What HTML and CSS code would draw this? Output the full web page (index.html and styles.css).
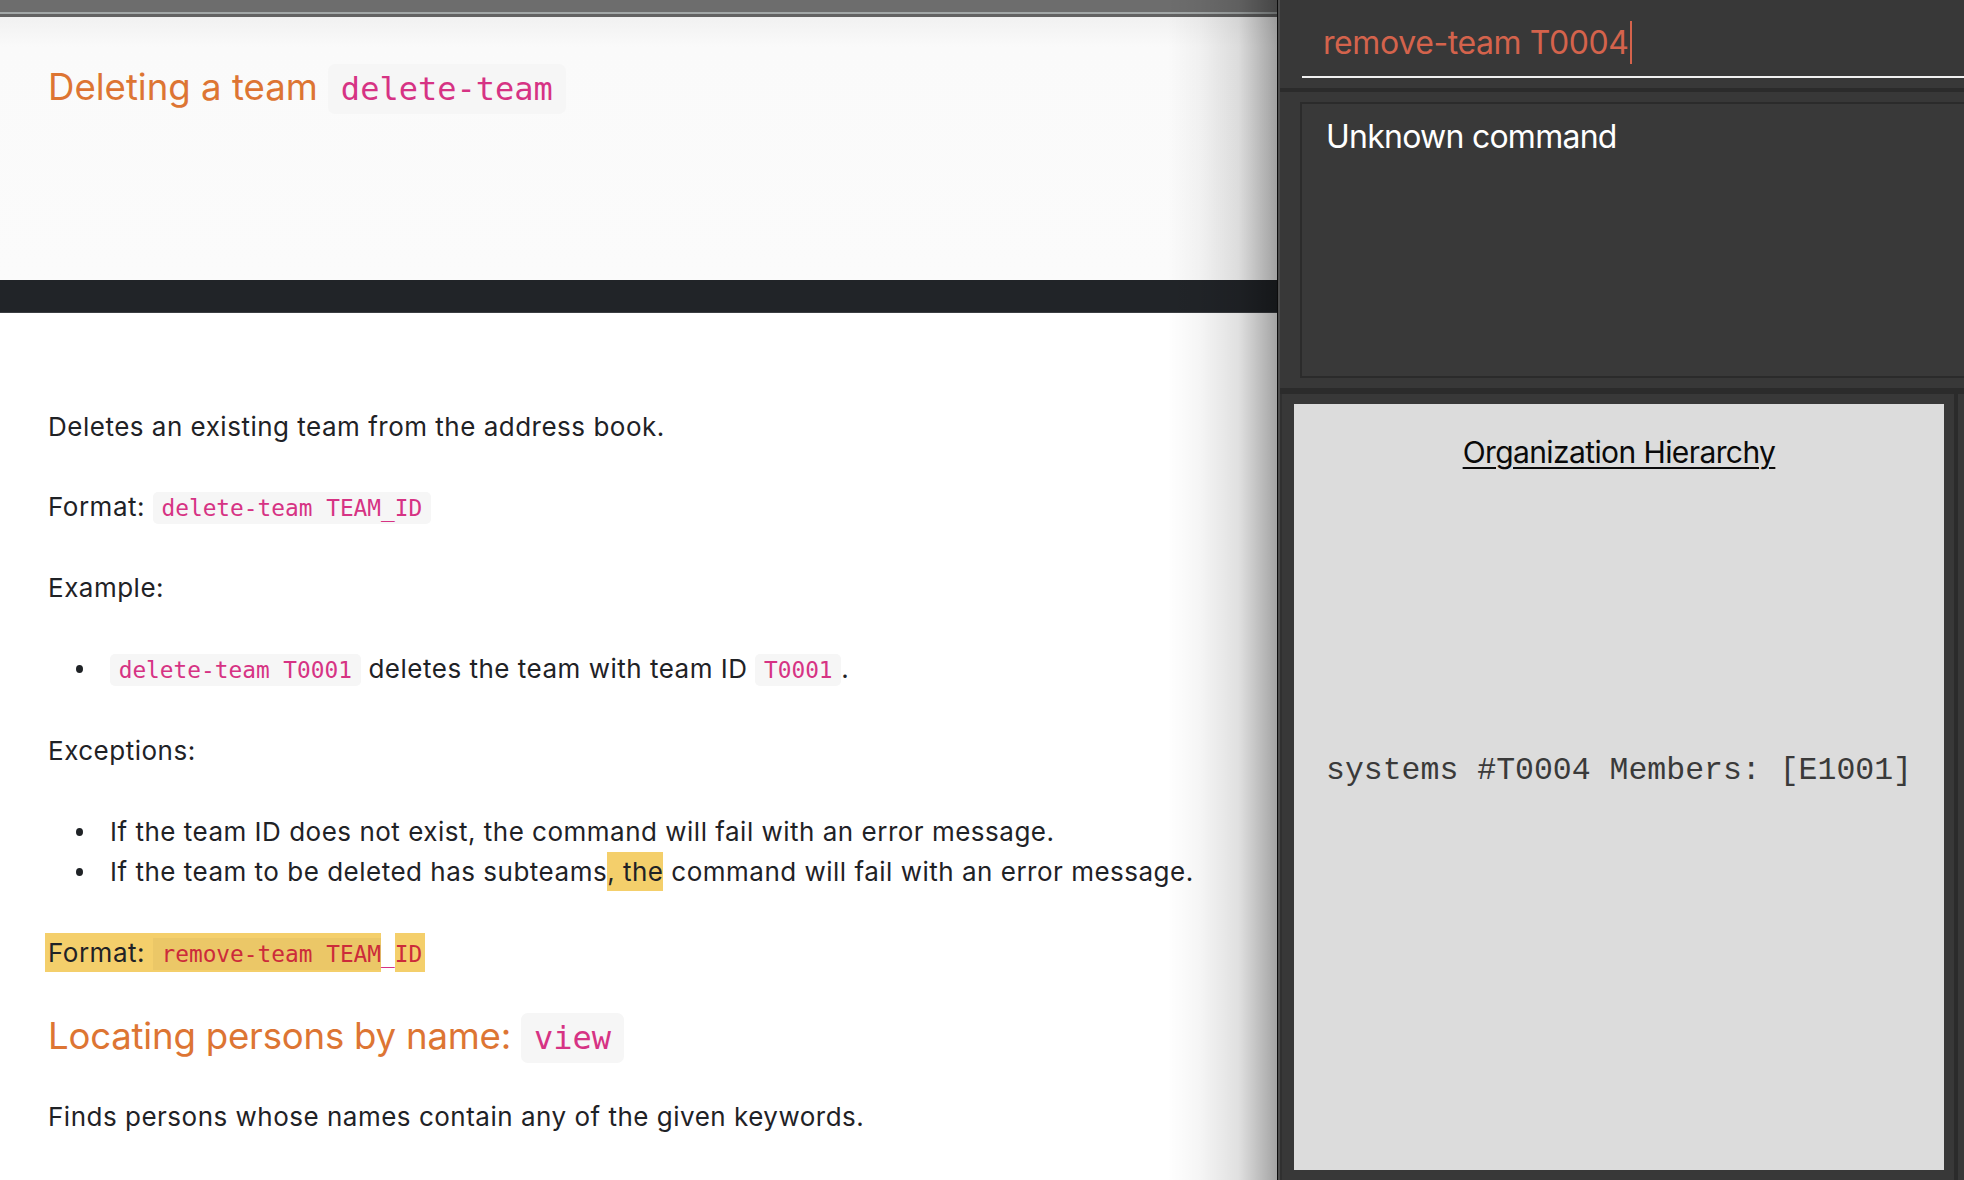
FILE: index.html
```html
<!DOCTYPE html>
<html lang="en">
<head>
<meta charset="utf-8">
<title>User Guide</title>
<link rel="stylesheet" href="styles.css">
</head>
<body>
<div class="app">
  <div class="doc">
    <div class="topbar"></div>
    <div class="hero">
      <h2 class="doc-h">Deleting a team <code>delete-team</code></h2>
    </div>
    <div class="band"></div>
    <div class="content">
      <p>Deletes an existing team from the address book.</p>
      <p>Format: <code>delete-team TEAM_ID</code></p>
      <p>Example:</p>
      <ul>
        <li><code>delete-team T0001</code> deletes the team with team ID <code>T0001</code>.</li>
      </ul>
      <p>Exceptions:</p>
      <ul>
        <li>If the team ID does not exist, the command will fail with an error message.</li>
        <li>If the team to be deleted has subteams<mark class="hl">, the</mark> command will fail with an error message.</li>
      </ul>
      <p class="fmt2"><mark class="hl hl-lead">Format: <code class="code-hl">remove-team TEAM</code></mark><code class="code-gap">_</code><mark class="hl"><code class="code-hl code-end">ID</code></mark></p>
      <h2 class="doc-h">Locating persons by name: <code>view</code></h2>
      <p>Finds persons whose names contain any of the given keywords.</p>
    </div>
  </div>
  <div class="side">
    <div class="cmd">
      <div class="cmd-input">remove-team T0004<span class="caret"></span></div>
    </div>
    <div class="sep sep-thin"></div>
    <div class="result">
      <div class="result-box">Unknown command</div>
    </div>
    <div class="sep sep-thick"></div>
    <div class="hier-row">
      <div class="hier-pane">
        <div class="hier-box">
          <div class="hier-title">Organization Hierarchy</div>
          <div class="hier-text">systems #T0004 Members: [E1001]</div>
        </div>
      </div>
      <div class="vdiv"></div>
    </div>
  </div>
</div>
</body>
</html>
```

FILE: styles.css
```css
* { box-sizing: border-box; }
html, body { margin: 0; padding: 0; }
body {
  width: 1964px;
  height: 1180px;
  overflow: hidden;
  background: #383838;
}
.app {
  display: flex;
  height: 1180px;
}

/* ---------- documentation panel ---------- */
.doc {
  width: 1278px;
  flex: none;
  position: relative;
  display: flex;
  flex-direction: column;
  background: #fff;
  border-right: 1px solid #0d0d0d;
  font-family: Inter, "Noto Sans", sans-serif;
  color: #1f2226;
}
.doc::after {
  content: "";
  position: absolute;
  top: 0;
  right: 0;
  bottom: 0;
  width: 110px;
  pointer-events: none;
  background: linear-gradient(to right,
    rgba(0,0,0,0) 0%,
    rgba(0,0,0,0.04) 30%,
    rgba(0,0,0,0.12) 65%,
    rgba(0,0,0,0.36) 100%);
}
.topbar {
  height: 17px;
  flex: none;
  background: linear-gradient(#6d6d6d 0 12px, #a2a7a7 12px 14px, #626262 14px 17px);
}
.hero {
  height: 263px;
  flex: none;
  padding: 45px 48px 0;
  background: linear-gradient(#f1f1f1, #fafafa 30px, #fbfbfb);
}
.band {
  height: 33px;
  flex: none;
  background: #212428;
  border-bottom: 1px solid #3b3e42;
}
.content {
  flex: 1;
  padding: 94px 48px 0;
  background: #fff;
}
.doc-h {
  margin: 0;
  font-size: 36.6px;
  font-weight: 400;
  line-height: 51px;
  color: #dd7533;
}
.content .doc-h {
  margin: 37px 0 33px;
  letter-spacing: -0.2px;
}
.content .fmt2 {
  margin-bottom: 37px;
}
.doc-h code {
  font-size: 32px;
  padding: 0.2em 0.4em;
  border-radius: 7px;
  letter-spacing: 0;
}
.content p {
  margin: 0 0 40px;
  font-size: 26px;
  line-height: 40px;
  letter-spacing: 0.5px;
}
.content ul {
  margin: 41px 0;
  padding-left: 62px;
  list-style: none;
  font-size: 26px;
  line-height: 40px;
  letter-spacing: 0.5px;
}
.content li {
  position: relative;
}
.content li::before {
  content: "";
  position: absolute;
  left: -34px;
  top: 16px;
  width: 7px;
  height: 8px;
  border-radius: 50%;
  background: #1f2226;
}
code {
  font-family: "DejaVu Sans Mono", "Liberation Mono", monospace;
  font-size: 22.8px;
  letter-spacing: 0;
  color: #d63384;
  background: #f6f6f6;
  padding: 0.12em 0.38em;
  border-radius: 5px;
}
.hl {
  background: #f4cf6b;
  color: inherit;
  padding: 4px 0;
}
.hl-lead {
  margin-left: -3px;
  padding-left: 3px;
}
.code-hl {
  background: #ebc767;
  color: #cc2b3a;
  border-radius: 0;
  padding-right: 0;
}
.code-end {
  background: #f4cf6b;
  padding-left: 0;
  padding-right: 3px;
}
.code-gap {
  padding: 0;
  background: #fff;
  border-radius: 0;
}

/* ---------- application panel ---------- */
.side {
  flex: 1;
  display: flex;
  flex-direction: column;
  background: #383838;
  border-left: 2px solid #4e4e4e;
  font-family: Inter, "Noto Sans", sans-serif;
}
.cmd {
  height: 88px;
  flex: none;
  padding-left: 22px;
}
.cmd-input {
  height: 78px;
  padding: 21px 0 0 21px;
  border-bottom: 2px solid #f0f0f0;
  font-size: 32px;
  line-height: 40px;
  letter-spacing: -0.4px;
  color: #d4634c;
  white-space: nowrap;
}
.caret {
  display: inline-block;
  width: 2px;
  height: 43px;
  margin-left: 1px;
  vertical-align: -10px;
  background: #d4634c;
}
.sep { flex: none; background: #2b2b2b; }
.sep-thin { height: 4px; }
.sep-thick { height: 6px; }
.result {
  height: 296px;
  flex: none;
  padding: 10px 0 10px 20px;
}
.result-box {
  height: 100%;
  border: 2px solid #2b2b2b;
  border-right: none;
  padding: 13px 0 0 24px;
  font-size: 32px;
  line-height: 40px;
  letter-spacing: -0.75px;
  color: #fff;
  background: #393939;
}
.hier-row {
  flex: 1;
  display: flex;
}
.hier-pane {
  width: 674px;
  flex: none;
  padding: 10px 10px 10px 12px;
  border-left: 2px solid #303030;
}
.hier-box {
  height: 100%;
  display: flex;
  flex-direction: column;
  align-items: center;
  background: #dcdcdc;
}
.hier-title {
  margin-top: 30px;
  font-size: 30px;
  line-height: 36px;
  letter-spacing: -0.6px;
  color: #0a0a0a;
  text-decoration: underline;
  text-decoration-thickness: 1.5px;
  text-underline-offset: 4px;
}
.hier-text {
  margin-top: 283px;
  font-family: "Liberation Mono", "Courier New", monospace;
  font-size: 31.5px;
  line-height: 36px;
  color: #3a3a3a;
  white-space: pre;
}
.vdiv {
  width: 4px;
  flex: none;
  background: #2b2b2b;
}
```
